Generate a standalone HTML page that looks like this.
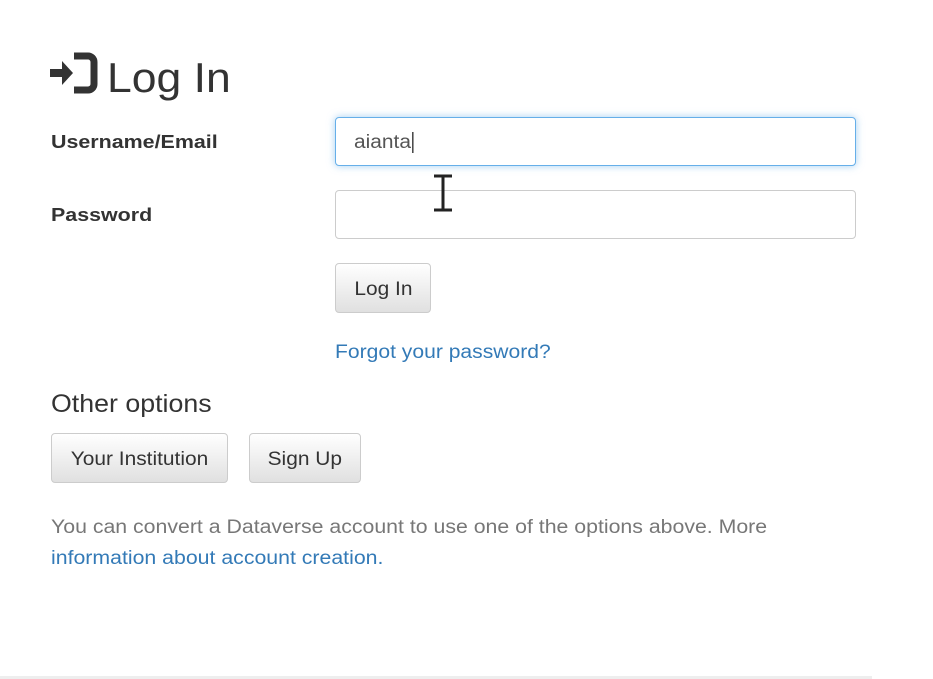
<!DOCTYPE html>
<html><head><style>
body{margin:0;width:933px;height:679px;background:#fff;font-family:"Liberation Sans",sans-serif;position:relative;overflow:hidden}
.a{position:absolute}
.s{display:inline-block;transform-origin:left center}
.lbl{font-weight:bold;font-size:18px;color:#333;left:51px}
.inp{left:335px;width:519px;height:47px;border:1px solid #ccc;border-radius:4px;background:#fff}
.btn{border:1px solid #ccc;border-radius:4px;background:linear-gradient(#fff,#e0e0e0);font-size:19px;color:#333;text-align:center;line-height:52px;height:48px;box-sizing:content-box}
.btn span{display:inline-block;transform:scaleX(1.1)}
a{color:#337ab7;text-decoration:none}
</style></head><body>
<svg class="a" style="left:50px;top:52px" width="50" height="42" viewBox="0 0 50 42">
<path d="M0 17h12v-8l11 12-11 12v-8H0z" fill="#333"/>
<path d="M24 4h14a6 6 0 0 1 6 6v22a6 6 0 0 1-6 6H24" fill="none" stroke="#333" stroke-width="7"/>
</svg>
<div class="a" style="left:107px;top:54px;font-size:42px;color:#333"><span class="s" style="transform:scaleX(1.06)">Log In</span></div>
<div class="a lbl" style="top:132px"><span class="s" style="transform:scaleX(1.19)">Username/Email</span></div>
<div class="a lbl" style="top:205px"><span class="s" style="transform:scaleX(1.19)">Password</span></div>
<div class="a inp" style="top:117px;border-color:#66afe9;box-shadow:0 0 8px rgba(102,175,233,.6)"></div>
<div class="a" style="left:354px;top:132px;font-size:19px;color:#555"><span class="s" style="transform:scaleX(1.1)">aianta<span style="border-left:1px solid #000;margin-left:1px"></span></span></div>
<div class="a inp" style="top:190px"></div>
<svg class="a" style="left:432px;top:174px" width="22" height="38"><path d="M2 2h18M11 2v34M2 36h18" stroke="#222" stroke-width="3" fill="none"/></svg>
<div class="a btn" style="left:335px;top:263px;width:94px"><span>Log In</span></div>
<div class="a" style="left:335px;top:342px;font-size:19px"><a class="s" style="transform:scaleX(1.11)">Forgot your password?</a></div>
<div class="a" style="left:51px;top:390px;font-size:25px;color:#333"><span class="s" style="transform:scaleX(1.07)">Other options</span></div>
<div class="a btn" style="left:51px;top:433px;width:175px"><span>Your Institution</span></div>
<div class="a btn" style="left:249px;top:433px;width:110px"><span>Sign Up</span></div>
<div class="a" style="left:51px;top:512px;font-size:19px;color:#777;line-height:31px;width:800px"><span class="s" style="transform:scaleX(1.12)">You can convert a Dataverse account to use one of the options above. More</span><br><span class="s" style="transform:scaleX(1.12)"><a>information about account creation.</a></span></div>
<div class="a" style="left:0;top:676px;width:872px;height:3px;background:#eee"></div>
</body></html>
